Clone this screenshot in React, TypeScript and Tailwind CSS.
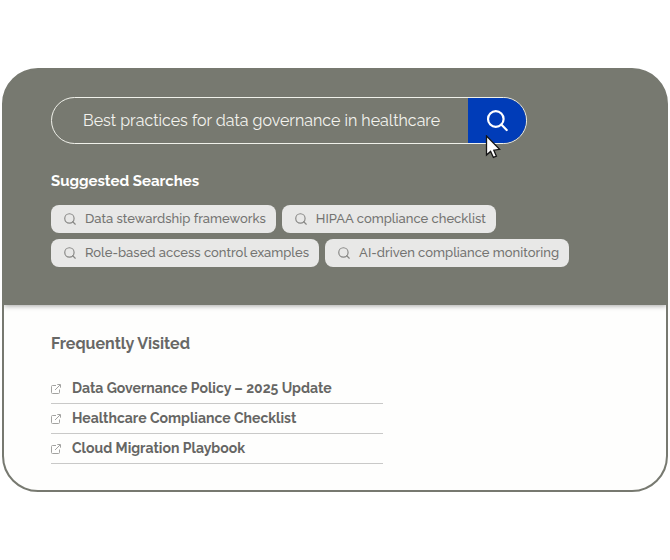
import { Search } from 'lucide-react'

const suggestionRows = [
  ['Data stewardship frameworks', 'HIPAA compliance checklist'],
  ['Role-based access control examples', 'AI-driven compliance monitoring'],
]

const visited = [
  'Data Governance Policy – 2025 Update',
  'Healthcare Compliance Checklist',
  'Cloud Migration Playbook',
]

function OpenIcon() {
  return (
    <svg viewBox="0 0 10 10" className="size-2.5 shrink-0 text-[#a3a3a1]" fill="none" stroke="currentColor" aria-hidden="true">
      <path d="M5 1.5 H1.5 Q0.5 1.5 0.5 2.5 V8.5 Q0.5 9.5 1.5 9.5 H7.5 Q8.5 9.5 8.5 8.5 V5.5" />
      <path d="M4 6 L9 1 M6.3 0.5 H9.5 V3.7" />
    </svg>
  )
}

function SearchBar() {
  return (
    <form
      role="search"
      onSubmit={(e) => e.preventDefault()}
      className="relative flex h-[47px] max-w-[476px]"
    >
      <div className="flex flex-1 overflow-hidden rounded-full border border-[#f0f1ea]">
        <input
          type="text"
          aria-label="Search"
          defaultValue="Best practices for data governance in healthcare"
          className="min-w-0 flex-1 bg-transparent pl-[31px] text-[16px] text-[#f3f3ee] outline-none"
        />
        <button
          type="submit"
          aria-label="Run search"
          className="flex w-[58px] shrink-0 items-center justify-center bg-[#003cb8] text-white"
        >
          <svg viewBox="0 0 22 22" className="size-[22px]" fill="none" stroke="currentColor" strokeWidth="2.2" strokeLinecap="round">
            <circle cx="9.8" cy="9" r="7.8" />
            <path d="M15.3 14.5 L20.7 20" />
          </svg>
        </button>
      </div>
      {/* mouse pointer over the button */}
      <svg viewBox="0 0 16 24" className="absolute top-[38px] right-[26px] h-6 w-4" aria-hidden="true">
        <path
          d="M1.5 1 V20 L5.6 16.4 L8.4 22.4 L11.4 21.2 L8.8 15.2 L14.6 14.4 Z"
          fill="white"
          stroke="#151515"
          strokeWidth="1.3"
          strokeLinejoin="miter"
        />
      </svg>
    </form>
  )
}

export default function App() {
  return (
    <div className="flex min-h-screen items-center bg-white px-0.5 font-['Raleway','Lato',sans-serif]">
      <main className="w-full overflow-hidden rounded-[36px] border-2 border-[#777970] bg-[#777970]">
        <section className="relative px-[47px] pt-[27px] pb-[38px] shadow-[0_1px_5px_rgba(0,0,0,0.35)]">
          <SearchBar />
          <h2 className="mt-[25px] text-[15px] leading-6 font-bold text-white">Suggested Searches</h2>
          <div className="mt-3 flex flex-col gap-1.5">
            {suggestionRows.map((row) => (
              <div key={row[0]} className="flex flex-wrap gap-1.5">
                {row.map((label) => (
                  <button
                    key={label}
                    type="button"
                    className="flex h-7 items-center gap-2 rounded-lg bg-[#e8e8e7] pr-2.5 pl-3 text-[13px] font-medium text-[#747472]"
                  >
                    <Search className="size-3.5 text-[#888886]" strokeWidth={2} />
                    {label}
                  </button>
                ))}
              </div>
            ))}
          </div>
        </section>

        <section className="bg-[#fefefd] px-[47px] pt-[27px] pb-[26px]">
          <h2 className="text-[16px] leading-6 font-bold text-[#686866]">Frequently Visited</h2>
          <ul className="mt-[18px] max-w-[332px]">
            {visited.map((title) => (
              <li key={title} className="border-b border-[#c9c9c8]">
                <a href="#" className="flex h-[29px] items-center gap-[11px] text-[14px] font-bold text-[#666664]">
                  <OpenIcon />
                  {title}
                </a>
              </li>
            ))}
          </ul>
        </section>
      </main>
    </div>
  )
}
